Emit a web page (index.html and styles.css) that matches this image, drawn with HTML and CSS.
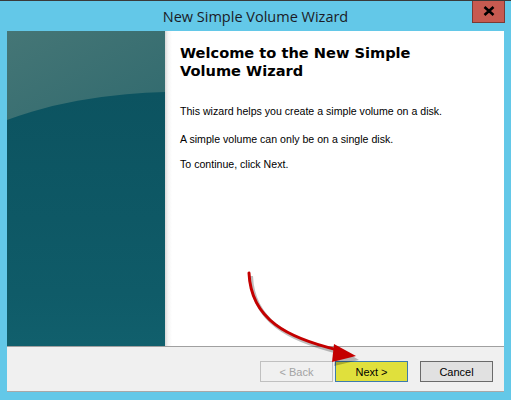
FILE: index.html
```html
<!DOCTYPE html>
<html lang="en">
<head>
    <meta charset="UTF-8">
    <title>New Simple Volume Wizard</title>
    <link rel="stylesheet" href="styles.css">
</head>
<body>
    <div class="window">
        <div class="title-bar">
            <div class="title">New Simple Volume Wizard</div>
            <button class="close-button">
                <svg width="12" height="10" viewBox="0 0 12 10">
                    <path d="M1.5 1 L10.5 9 M10.5 1 L1.5 9" stroke="#000" stroke-width="2.6"/>
                </svg>
            </button>
        </div>
        <div class="wizard-body">
            <div class="side-panel"></div>
            <div class="welcome">
                <h1>Welcome to the New Simple Volume Wizard</h1>
                <p class="first">This wizard helps you create a simple volume on a disk.</p>
                <p class="second">A simple volume can only be on a single disk.</p>
                <p class="third">To continue, click Next.</p>
            </div>
        </div>
        <div class="wizard-footer">
            <button class="btn btn-back" disabled>&lt; Back</button>
            <button class="btn btn-next">Next &gt;</button>
            <button class="btn btn-cancel">Cancel</button>
        </div>
        <svg class="annotation" width="511" height="400" viewBox="0 0 511 400">
            <path d="M251 276 C253 322, 290 340, 338 352" fill="none" stroke="rgba(0,0,0,0.25)" stroke-width="4"/>
            <polygon points="337,347 359,360 334,366" fill="rgba(0,0,0,0.25)"/>
            <path d="M249 273 C251 320, 288 338, 338 350" fill="none" stroke="#c40000" stroke-width="3" stroke-linecap="round"/>
            <polygon points="334,344 356,356 332,362" fill="#c40000"/>
        </svg>
    </div>
</body>
</html>
```

FILE: styles.css
```css
body {
    margin: 0;
    padding: 0;
    background-color: #63c8e8;
    font-family: "Liberation Sans", Arial, sans-serif;
}
.window {
    position: relative;
    width: 511px;
    height: 400px;
    border-top: 1px solid #3a3a3a;
    box-sizing: border-box;
    background-color: #63c8e8;
}
.title-bar {
    display: grid;
    grid-template-columns: 1fr auto 1fr;
    height: 30px;
}
.title {
    grid-column: 2;
    padding-top: 6px;
    font-family: "Open Sans", sans-serif;
    font-size: 14.5px;
    color: #1b1b26;
}
.close-button {
    grid-column: 3;
    justify-self: end;
    display: flex;
    align-items: center;
    justify-content: center;
    width: 33px;
    height: 22px;
    margin: 0 6px 0 0;
    padding: 0 0 2px 0;
    border: 1px solid #7b3a34;
    border-top: none;
    background-color: #c75a50;
}
.wizard-body {
    display: flex;
    margin: 0 7px;
    height: 315px;
    border-bottom: 1px solid #a0a0a0;
}
.side-panel {
    position: relative;
    overflow: hidden;
    width: 158px;
    background: linear-gradient(150deg, #457676 0%, #2a666c 60%, #1d5c64 100%);
}
.side-panel::after {
    content: "";
    position: absolute;
    left: -90px;
    top: 61px;
    width: 520px;
    height: 400px;
    border-top-left-radius: 260px 115px;
    border-top-right-radius: 260px 115px;
    background: linear-gradient(180deg, #0c5360 0%, #0f5b68 50%, #156b78 100%);
}
.welcome {
    flex: 1;
    padding: 13px 15px 0 15px;
    background: linear-gradient(90deg, #d8d8d8 0px, #f4f4f4 3px, #ffffff 7px);
}
.welcome h1 {
    margin: 0;
    width: 240px;
    font-family: "DejaVu Sans", Verdana, sans-serif;
    font-size: 14.6px;
    line-height: 18px;
    font-weight: bold;
    color: #000;
}
.welcome p {
    margin: 0;
    font-size: 10.6px;
    color: #000;
}
.welcome .first {
    margin-top: 25px;
}
.welcome .second {
    margin-top: 16px;
}
.welcome .third {
    margin-top: 13px;
}
.wizard-footer {
    display: flex;
    justify-content: flex-end;
    align-items: flex-start;
    margin: 0 7px;
    height: 45px;
    padding: 14px 11px 0 0;
    box-sizing: border-box;
    background-color: #f0f0f0;
    border-bottom: 1px solid #a8a8a8;
}
.btn {
    width: 73px;
    height: 21px;
    padding: 0;
    font-family: "Liberation Sans", Arial, sans-serif;
    font-size: 11px;
    color: #000;
    box-sizing: border-box;
}
.btn-back {
    background-color: #f0f0f0;
    border: 1px solid #c0c0c0;
    color: #a3a3a3;
}
.btn-next {
    margin-left: 2px;
    background-color: #e0e03c;
    border: 1px solid #3d7bad;
}
.btn-cancel {
    margin-left: 12px;
    background-color: #e1e1e1;
    border: 1px solid #6a6a6a;
}
.annotation {
    position: absolute;
    left: 0;
    top: -1px;
    pointer-events: none;
}
```
